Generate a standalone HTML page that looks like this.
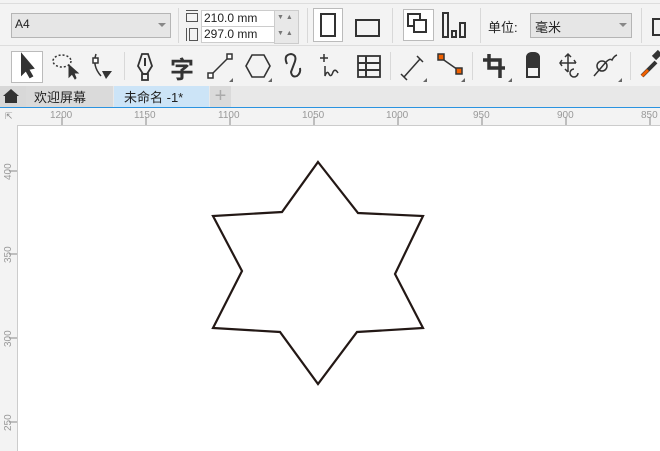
<!DOCTYPE html><html><head><meta charset="utf-8"><style>
body{margin:0;width:660px;height:450px;overflow:hidden;background:#f3f3f3;font-family:"Liberation Sans","Noto Sans CJK SC",sans-serif;position:relative}
.a{position:absolute}
.sep{position:absolute;width:1px;background:#d8d8d8}
.t{font-size:12px;color:#222}
</style></head><body>
<div class="a" style="left:0;top:3px;width:660px;height:1px;background:#ddd"></div>
<div class="a" style="left:0;top:45px;width:660px;height:1px;background:#ddd"></div>
<!-- row1 -->
<div class="a" style="left:11px;top:13px;width:158px;height:23px;background:#e6e6e6;border:1px solid #b5b5b5"></div>
<div class="a t" style="left:15px;top:17px">A4</div>
<div class="a" style="left:158px;top:23px;border:4px solid transparent;border-top:4px solid #888"></div>
<div class="sep" style="left:178px;top:8px;height:35px"></div>
<svg class="a" style="left:185px;top:9px" width="14" height="34"><rect x="1.5" y="4.5" width="11" height="8" fill="none" stroke="#555"/><line x1="1" y1="1.5" x2="13" y2="1.5" stroke="#555"/><rect x="4.5" y="19.5" width="8" height="12" fill="none" stroke="#555"/><line x1="1.5" y1="19" x2="1.5" y2="32" stroke="#555"/></svg>
<div class="a" style="left:201px;top:10px;width:72px;height:15px;background:#fff;border:1px solid #ccc"></div>
<div class="a" style="left:201px;top:26px;width:72px;height:15px;background:#fff;border:1px solid #ccc"></div>
<div class="a t" style="left:204px;top:11px">210.0 mm</div>
<div class="a t" style="left:204px;top:27px">297.0 mm</div>
<div class="a" style="left:274px;top:10px;width:23px;height:32px;background:#e8e8e8;border:1px solid #ccc"></div>
<div class="a" style="left:277px;top:14px;color:#777;font-size:7px">▼ ▲</div>
<div class="a" style="left:277px;top:30px;color:#777;font-size:7px">▼ ▲</div>
<div class="sep" style="left:307px;top:8px;height:35px"></div>
<div class="a" style="left:313px;top:8px;width:28px;height:32px;background:#fff;border:1px solid #bbb"></div>
<div class="a" style="left:320px;top:13px;width:12px;height:20px;border:2px solid #333"></div>
<div class="a" style="left:355px;top:19px;width:21px;height:14px;border:2px solid #333"></div>
<div class="sep" style="left:392px;top:8px;height:35px"></div>
<div class="a" style="left:403px;top:9px;width:29px;height:30px;background:#fff;border:1px solid #bbb"></div>
<svg class="a" style="left:405px;top:11px" width="26" height="26"><rect x="3" y="3" width="12" height="12" fill="#fff" stroke="#333" stroke-width="2"/><rect x="9" y="9" width="12" height="12" fill="#fff" stroke="#333" stroke-width="2"/></svg>
<svg class="a" style="left:441px;top:11px" width="28" height="28"><rect x="2" y="2" width="5" height="24" fill="none" stroke="#333" stroke-width="2"/><rect x="11" y="20" width="4" height="6" fill="none" stroke="#333" stroke-width="2"/><rect x="19" y="12" width="5" height="14" fill="none" stroke="#333" stroke-width="2"/></svg>
<div class="sep" style="left:480px;top:8px;height:35px"></div>
<div class="a t" style="left:488px;top:17px;font-size:13px">单位:</div>
<div class="a" style="left:530px;top:13px;width:100px;height:23px;background:#e6e6e6;border:1px solid #b5b5b5"></div>
<div class="a t" style="left:535px;top:17px;font-size:13px">毫米</div>
<div class="a" style="left:619px;top:23px;border:4px solid transparent;border-top:4px solid #888"></div>
<div class="sep" style="left:641px;top:8px;height:35px"></div>
<div class="a" style="left:652px;top:18px;width:8px;height:14px;border:2px solid #333;border-right:none"></div>
<!-- row2 -->
<div class="a" style="left:11px;top:51px;width:30px;height:30px;background:#fff;border:1px solid #bbb"></div>
<svg class="a" style="left:0;top:48px" width="660" height="36" fill="none" stroke="#333" stroke-width="2">
<path d="M22 7 L22 26 L26 22 L30 29 L32 28 L28 21 L33 20 Z" fill="#333"/>
<ellipse cx="62" cy="13" rx="9" ry="6" stroke-dasharray="2 2" stroke-width="1.5"/>
<path d="M69 17 L69 29 L72 26 L75 31 L76 30 L74 25 L78 25 Z" fill="#333" stroke-width="1"/>
<path d="M96 6 Q92 18 101 28" stroke-width="1.5"/><rect x="93" y="10" width="5" height="5" fill="#fff" stroke-width="1.5"/><path d="M102 23 L112 23 L106 31 Z" fill="#333" stroke="none"/>
<path d="M142 6 L148 6 L152 18 L147 26 L143 26 L138 18 Z" stroke-width="1.8"/><line x1="145" y1="10" x2="145" y2="18"/><rect x="142" y="26" width="6" height="6" stroke-width="1.8"/>
<text x="170" y="30" font-size="24" font-weight="bold" fill="#333" stroke="none" font-family="Noto Sans CJK SC">字</text>
<line x1="212" y1="26" x2="228" y2="10" stroke-width="1.5"/><rect x="208" y="25" width="5" height="5" fill="#fff" stroke-width="1.5"/><rect x="227" y="6" width="5" height="5" fill="#fff" stroke-width="1.5"/>
<path d="M252 7 L264 7 L270 18 L264 29 L252 29 L246 18 Z" stroke-width="1.6"/>
<path d="M287 16 Q283 7 291 6 Q298 7 294 16 L291 24 Q292 30 297 28 Q301 25 300 20"/>
<path d="M324 6 L324 14 M320 10 L328 10" stroke-width="1.5"/><path d="M325 18 L325 28 Q327 22 329 26 Q331 30 333 24 Q335 20 338 25" stroke-width="1.5"/>
<rect x="358" y="8" width="22" height="21" stroke-width="1.8"/><path d="M358 15 L380 15 M358 22 L380 22 M366 8 L366 29"/>
<path d="M404 29 L420 11 M401 26 L407 32 M417 8 L423 14" stroke-width="1.5"/>
<path d="M441 10 L461 24" stroke-width="1.5"/><rect x="438" y="6" width="6" height="6" fill="#f06000" stroke-width="1.5"/><rect x="456" y="20" width="6" height="6" fill="#f06000" stroke-width="1.5"/>
<path d="M489 6 L489 20 L505 20 M483 12 L500 12 L500 30" stroke-width="3.5"/>
<path d="M527 10 Q527 5 533 5 Q539 5 539 10 L539 29 L527 29 Z M527 19 L539 19" stroke-width="2"/><path d="M527 10 Q527 5 533 5 Q539 5 539 10 L539 19 L527 19 Z" fill="#333"/>
<path d="M568 6 L568 24 M560 15 L576 15 M565 9 L568 6 L571 9 M565 21 L568 24 M562 12 L560 15 L562 18 M574 12 L576 15" stroke-width="1.5"/><path d="M578 25 A4 4 0 1 1 574 21" stroke-width="1.5"/>
<circle cx="602" cy="18" r="5" stroke-width="1.5"/><path d="M594 28 L606 14 Q610 10 612 12 Q614 8 617 7" stroke-width="1.5"/>
<path d="M642 28 L656 14" stroke-width="4"/><path d="M642 28 L648 22" stroke="#f06000" stroke-width="3"/><path d="M654 10 L660 4" stroke-width="6"/>
</svg>
<svg class="a" style="left:0;top:48px" width="660" height="36" fill="#666">
<path d="M229 34 L233 34 L233 30Z M268 34 L272 34 L272 30Z M423 34 L427 34 L427 30Z M461 34 L465 34 L465 30Z M508 34 L512 34 L512 30Z M618 34 L622 34 L622 30Z"/></svg>
<div class="sep" style="left:124px;top:52px;height:28px"></div>
<div class="sep" style="left:390px;top:52px;height:28px"></div>
<div class="sep" style="left:472px;top:52px;height:28px"></div>
<div class="sep" style="left:630px;top:52px;height:28px"></div>
<!-- tabs -->
<div class="a" style="left:0;top:86px;width:660px;height:21px;background:#e8e8e8"></div>
<div class="a" style="left:0;top:86px;width:26px;height:21px;background:#d8d8d8"></div>
<svg class="a" style="left:2px;top:88px" width="20" height="16"><path d="M1 8 L9 1 L17 8 L15 8 L15 15 L3 15 L3 8Z" fill="#333"/></svg>
<div class="a" style="left:26px;top:86px;width:87px;height:21px;background:#dadada"></div>
<div class="a t" style="left:34px;top:87px;font-size:13px">欢迎屏幕</div>
<div class="a" style="left:114px;top:86px;width:95px;height:21px;background:#cce4f7"></div>
<div class="a t" style="left:124px;top:87px;font-size:13px">未命名 -1*</div>
<div class="a" style="left:210px;top:86px;width:21px;height:21px;background:#dadada;color:#aaa;font-size:20px;line-height:20px;text-align:center">+</div>
<div class="a" style="left:0;top:107px;width:660px;height:1px;background:#2a93e0"></div>
<!-- rulers -->
<div class="a" style="left:17px;top:125px;width:643px;height:325px;background:#fff;border-left:1px solid #ccc;border-top:1px solid #ccc"></div>
<div class="a" style="left:5px;top:111px;font-size:9px;color:#888">⇱</div>
<svg class="a" style="left:0;top:108px" width="660" height="342" font-family="Liberation Sans" font-size="10" fill="#999">
<g stroke="#888">
<path d="M62 9 L62 17 M146 9 L146 17 M230 9 L230 17 M314 9 L314 17 M398 9 L398 17 M482 9 L482 17 M566 9 L566 17 M650 9 L650 17"/>
<path d="M9 63 L17 63 M9 146 L17 146 M9 230 L17 230 M9 314 L17 314"/>
</g>
<text x="50" y="10">1200</text><text x="134" y="10">1150</text><text x="218" y="10">1100</text><text x="302" y="10">1050</text><text x="386" y="10">1000</text><text x="473" y="10">950</text><text x="557" y="10">900</text><text x="641" y="10">850</text>
<g transform="rotate(-90)"><text x="-72" y="11">400</text><text x="-155" y="11">350</text><text x="-239" y="11">300</text><text x="-323" y="11">250</text></g>
</svg>
<svg class="a" style="left:0;top:0" width="660" height="450"><path d="M318 162 L358 213 L423 216 L395 274 L423 328 L357 332 L318 384 L280 332 L213 328 L242 271 L213 216 L282 212 Z" fill="none" stroke="#231815" stroke-width="2.2"/></svg>
</body></html>
